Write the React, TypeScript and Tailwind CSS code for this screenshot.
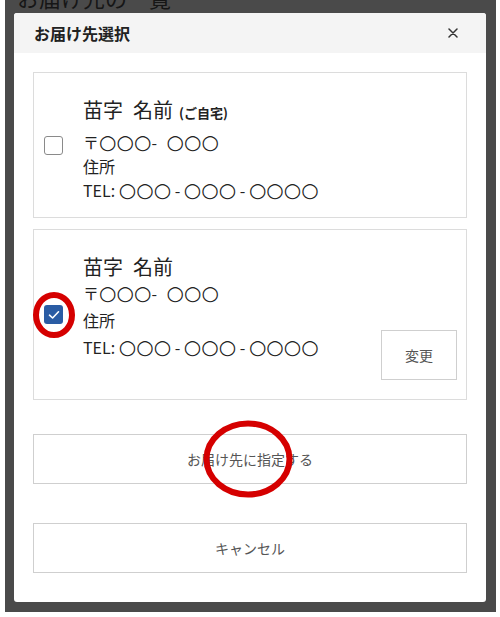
import React from "react";

type Address = {
  family: string;
  given: string;
  label?: string;
  address: string;
  checked: boolean;
};

const addresses: Address[] = [
  { family: "苗字", given: "名前", label: "(ご自宅)", address: "住所", checked: false },
  { family: "苗字", given: "名前", address: "住所", checked: true },
];

// placeholder digits, thin full circles as in the design
function O({ n, gap }: { n: number; gap?: boolean }) {
  return (
    <span
      className={
        gap
          ? "ml-[6px] font-['DejaVu_Sans',sans-serif] text-[20px]"
          : "font-['DejaVu_Sans',sans-serif] text-[20px]"
      }
    >
      {"○".repeat(n)}
    </span>
  );
}

function Checkbox({ checked }: { checked: boolean }) {
  if (checked) {
    return (
      <span className="flex h-[19px] w-[19px] shrink-0 items-center justify-center rounded-[3px] bg-[#2a5ca4]">
        <svg width="12" height="10" viewBox="0 0 12 10" fill="none">
          <path
            d="M1.5 5.2 L4.6 8 L10.5 1.8"
            stroke="#fff"
            strokeWidth="1.6"
            strokeLinecap="round"
            strokeLinejoin="round"
          />
        </svg>
      </span>
    );
  }
  return (
    <span className="block h-[19px] w-[19px] shrink-0 rounded-[3px] border-[1.5px] border-[#8a8a8a] bg-white" />
  );
}

function AddressCard({ item, first }: { item: Address; first: boolean }) {
  return (
    <div
      className={
        first
          ? "flex h-[146px] items-center border border-[#dcdcdc] pl-[10px]"
          : "mt-[11px] flex h-[171px] items-center border border-[#dcdcdc] pl-[10px]"
      }
    >
      <Checkbox checked={item.checked} />
      <div className="ml-[20px] self-start pt-[23px] text-[#222]">
        <p className="text-[20px] leading-[28px]">
          <span className="mr-[10px]">{item.family}</span>
          {item.given}
          {item.label && (
            <span className="ml-[6px] text-[13px] font-bold">{item.label}</span>
          )}
        </p>
        <p className={first ? "mt-[3px] text-[16px] leading-[24px]" : "text-[16px] leading-[24px]"}>
          〒<O n={3} />- <O n={3} gap />
        </p>
        <p className={first ? "text-[16px] leading-[24px]" : "mt-[3px] text-[16px] leading-[24px]"}>
          {item.address}
        </p>
        <p className={first ? "text-[16px] leading-[24px]" : "mt-[3px] text-[16px] leading-[24px]"}>
          TEL: <O n={3} /> - <O n={3} /> - <O n={4} />
        </p>
      </div>
      {!first && (
        <button className="mb-[19px] ml-auto mr-[9px] h-[50px] w-[76px] self-end border border-[#cfcfcf] bg-white text-[14px] text-[#555]">
          変更
        </button>
      )}
    </div>
  );
}

export default function App() {
  return (
    <div className="h-[617px] w-[500px] bg-white pb-[5px] pl-[5px] pr-[4px] font-['Noto_Sans_CJK_JP','Noto_Sans',sans-serif]">
      <div className="relative h-full overflow-hidden bg-[#4a4a4a] pl-[9px] pr-[10px] pt-[13px]">
        {/* dimmed page behind the dialog */}
        <p className="absolute left-[12px] top-[-18px] text-[22px] leading-[30px] text-[#161616]">
          お届け先の一覧
        </p>
        <p className="absolute left-[24px] top-[606px] text-[16px] leading-[24px] text-[#161616]">
          TEL:
        </p>

        <div className="relative h-[589px] rounded-[3px] bg-white">
          <div className="flex h-[40px] items-center justify-between rounded-t-[3px] bg-[#f4f4f4] pl-[20px] pr-[28px]">
            <h2 className="text-[16px] font-semibold text-[#222]">お届け先選択</h2>
            <svg width="10" height="10" viewBox="0 0 10 10">
              <path
                d="M1 1 L9 9 M9 1 L1 9"
                stroke="#333"
                strokeWidth="1.5"
                strokeLinecap="round"
              />
            </svg>
          </div>

          <div className="px-[19px] pt-[19px]">
            {addresses.map((item, i) => (
              <AddressCard key={i} item={item} first={i === 0} />
            ))}

            <button className="mt-[34px] flex h-[50px] w-full items-center justify-center border border-[#cfcfcf] bg-white text-[14px] text-[#555]">
              お届け先に指定する
            </button>
            <button className="mt-[39px] flex h-[50px] w-full items-center justify-center border border-[#cfcfcf] bg-white text-[14px] text-[#555]">
              キャンセル
            </button>
          </div>

          {/* red annotation marks */}
          <svg
            className="absolute left-[17px] top-[278px]"
            width="46"
            height="48"
            viewBox="0 0 46 48"
          >
            <ellipse cx="23" cy="24" rx="18" ry="20" fill="none" stroke="#d50000" strokeWidth="6" />
          </svg>
          <svg
            className="absolute left-[188px] top-[406px]"
            width="92"
            height="80"
            viewBox="0 0 92 80"
          >
            <ellipse cx="46" cy="40" rx="41.5" ry="35.5" fill="none" stroke="#d50000" strokeWidth="6" />
          </svg>
        </div>
      </div>
    </div>
  );
}
